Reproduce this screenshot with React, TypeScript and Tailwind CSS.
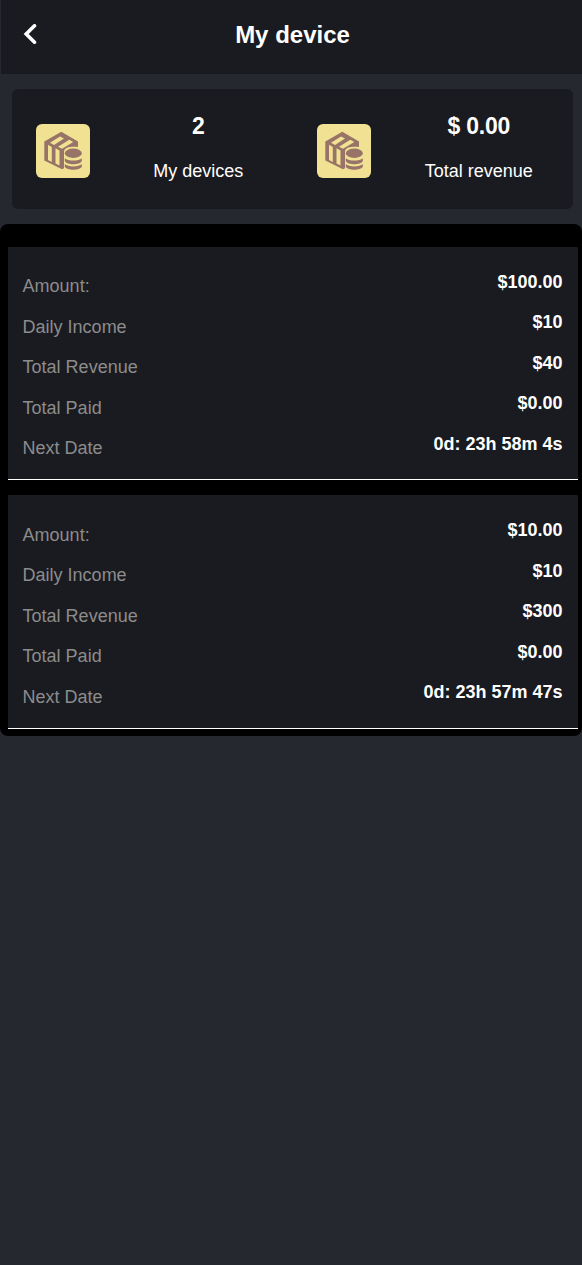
import React, { ReactNode } from 'react';

type Device = {
  id: number;
  amount: string;
  daily: string;
  revenue: string;
  paid: string;
  next: string;
};

const devices: Device[] = [
  {
    id: 1,
    amount: '$100.00',
    daily: '$10',
    revenue: '$40',
    paid: '$0.00',
    next: '0d: 23h 58m 4s',
  },
  {
    id: 2,
    amount: '$10.00',
    daily: '$10',
    revenue: '$300',
    paid: '$0.00',
    next: '0d: 23h 57m 47s',
  },
];

const BoxIcon = () => (
  <svg viewBox="0 0 54 54" className="size-[54px] shrink-0 rounded-md bg-[#f1e192]">
    <path
      d="M25.300 7.700 8.300 17.500v19L26 45.200l2.500-1.200V28l13.500-4V17.500z"
      fill="#987468"
    />
    <g fill="#f1e192">
      <path d="M12 20.700l3.800 2.200v15l-3.800-2zM19.500 24.300l4 2.300v15l-4-2.200z" />
      <path d="M14 18.700 24 12.500l4 2L18 20.900zM22 22.700l11.300-7 4 2.200L26 24.700z" />
      <path d="M28 46V28c0-5 7-5.500 14-5v23z" />
    </g>
    <g fill="#987468">
      <ellipse cx="37.300" cy="29.200" rx="8.500" ry="4.700" />
      <path d="M28.800 34.200c3 3.200 14 3.200 17 0V37c-2 4.300-15 4.300-17 0z" />
      <path d="M28.800 40c3 3.200 14 3.200 17 0v2.800c-2 4-15 4-17 0z" />
    </g>
  </svg>
);

const Stat = ({ value, label }: { value: ReactNode; label: string }) => (
  <div className="flex w-1/2 items-center pl-6">
    <BoxIcon />
    <div className="flex-1 pb-2.5 pl-3.5 text-center">
      <p className="text-[23px] leading-[34px] font-bold tracking-[-0.2px]">
        {value}
      </p>
      <p className="mt-4 text-lg leading-6">{label}</p>
    </div>
  </div>
);

const Row = ({ label, value }: { label: string; value: string }) => (
  <div className="flex h-[40.5px] justify-between">
    <span className="pt-[8.3px] text-[#8c8c8c]">{label}</span>
    <span className="pt-[3.8px] font-bold">{value}</span>
  </div>
);

export default function App() {
  return (
    <div className="min-h-screen bg-[#25282f] font-['Liberation_Sans',Arial,sans-serif] text-white">
      <header className="ml-px flex h-[74px] bg-[#1a1b20]">
        <button type="button" aria-label="Back" className="ml-[22px] w-4">
          <svg viewBox="0 0 16 20" className="mb-[6px] h-5 w-4" fill="none">
            <path
              d="M11.500 1.800 3.200 10l8.300 8.200"
              stroke="#fff"
              strokeWidth="3.600"
              strokeLinecap="round"
            />
          </svg>
        </button>
        <h1 className="mr-9 flex-1 text-center text-2xl leading-[70px] font-bold">
          My device
        </h1>
      </header>

      <section className="mt-[15px] mr-[9px] ml-3 flex h-[120px] rounded-md bg-[#1a1b20] pt-1">
        <Stat value="2" label="My devices" />
        <Stat value="$ 0.00" label="Total revenue" />
      </section>

      <main className="mt-[15px] flex h-[512px] flex-col gap-[15px] rounded-lg bg-black pt-[22.700px] pr-1 pl-2">
        {devices.map((device) => (
          <article
            key={device.id}
            className="h-[233.500px] shrink-0 border-b border-white bg-[#1a1b20] pt-[17.300px] pr-[15.500px] pl-[14.600px] text-lg"
          >
            <Row label="Amount:" value={device.amount} />
            <Row label="Daily Income" value={device.daily} />
            <Row label="Total Revenue" value={device.revenue} />
            <Row label="Total Paid" value={device.paid} />
            <Row label="Next Date" value={device.next} />
          </article>
        ))}
      </main>
    </div>
  );
}
